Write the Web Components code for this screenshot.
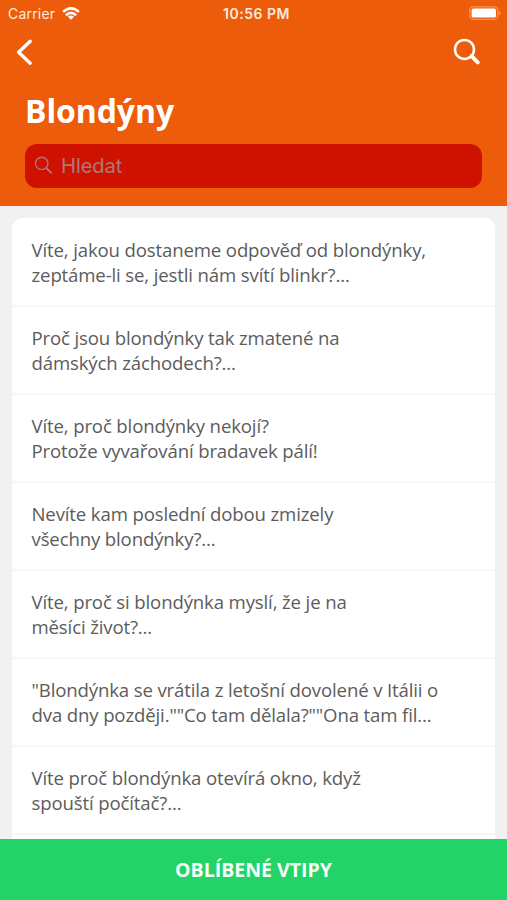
<!DOCTYPE html>
<html lang="cs">
<head>
<meta charset="utf-8">
<meta name="viewport" content="width=device-width, initial-scale=1">
<title>Blondýny</title>
<style>
  html, body {
    margin: 0;
    height: 100%;
    overflow: hidden;
  }
</style>
</head>
<body>
<joke-app>
  <status-bar slot="header" carrier="Carrier" time="10:56 PM"></status-bar>
  <nav-bar slot="header"></nav-bar>
  <page-title slot="header">Blondýny</page-title>
  <search-field slot="header">Hledat</search-field>

  <joke-list>
    <joke-item>Víte, jakou dostaneme odpověď od blondýnky,<br>zeptáme-li se, jestli nám svítí blinkr?...</joke-item>
    <joke-item>Proč jsou blondýnky tak zmatené na<br>dámských záchodech?...</joke-item>
    <joke-item>Víte, proč blondýnky nekojí?<br>Protože vyvařování bradavek pálí!</joke-item>
    <joke-item>Nevíte kam poslední dobou zmizely<br>všechny blondýnky?...</joke-item>
    <joke-item>Víte, proč si blondýnka myslí, že je na<br>měsíci život?...</joke-item>
    <joke-item>"Blondýnka se vrátila z letošní dovolené v Itálii o<br>dva dny později.""Co tam dělala?""Ona tam fil...</joke-item>
    <joke-item>Víte proč blondýnka otevírá okno, když<br>spouští počítač?...</joke-item>
  </joke-list>

  <favorites-button slot="footer">OBLÍBENÉ VTIPY</favorites-button>
</joke-app>

<script>
class JokeApp extends HTMLElement {
  constructor() {
    super();
    this.attachShadow( {mode:'open'} );
    this.shadowRoot.innerHTML = `
      <style>
        :host {
          display: flex;
          flex-direction: column;
          height: 100vh;
          overflow: hidden;
          background: #f1f1f1;
          font-family: "Open Sans", "Noto Sans", sans-serif;
        }

        header {
          flex: none;
          box-sizing: border-box;
          height: 206px;
          background: #ec5c0a;
          color: white;
        }

        main {
          flex: 1;
          min-height: 0;
          overflow: hidden;
          padding: 12px 12px 0;
        }
      </style>

      <header><slot name="header"></slot></header>
      <main><slot></slot></main>
      <slot name="footer"></slot>
    `;
  }
}

class StatusBar extends HTMLElement {
  constructor() {
    super();
    this.attachShadow( {mode:'open'} );
    this.shadowRoot.innerHTML = `
      <style>
        :host {
          display: grid;
          grid-template-columns: 1fr auto 1fr;
          align-items: center;
          box-sizing: border-box;
          height: 27px;
          padding: 0 5px 0 8px;
          font: 14px/27px Inter, "Liberation Sans", sans-serif;
          color: #ffe9dd;
        }

        .carrier {
          display: flex;
          align-items: center;
          gap: 7px;
          letter-spacing: .2px;
        }

        .time {
          padding-left: 3px;
          font-size: 14px;
          font-weight: 600;
          letter-spacing: .5px;
        }

        svg {
          display: block;
        }

        .battery {
          justify-self: end;
        }
      </style>

      <div class="carrier">
        <span id="carrier"></span>
        <svg width="18" height="13" viewBox="0 0 18 13" fill="none" stroke="#fff" stroke-width="2.5">
          <path d="M1.1 4.9Q9-2.2 16.9 4.9"/>
          <path d="M3.9 8.2Q9 3.6 14.1 8.2"/>
          <path fill="#fff" stroke="none" d="M9 12.8L5.9 9.8Q9 7.3 12.1 9.8Z"/>
        </svg>
      </div>
      <span class="time" id="time"></span>
      <svg class="battery" width="33" height="15" viewBox="0 0 33 15">
        <rect x=".8" y=".8" width="28" height="12.6" rx="3.5" fill="none" stroke="#f6935b" stroke-width="1.3"/>
        <rect x="2.6" y="2.6" width="24.4" height="9" rx="1.6" fill="#fff"/>
        <path fill="#f6935b" d="M29.9 4.9Q31.8 5.7 31.8 7.1T29.9 9.3Z"/>
      </svg>
    `;
  }

  connectedCallback() {
    this.shadowRoot.querySelector('#carrier').textContent = this.getAttribute('carrier');
    this.shadowRoot.querySelector('#time').textContent = this.getAttribute('time');
  }
}

class NavBar extends HTMLElement {
  constructor() {
    super();
    this.attachShadow( {mode:'open'} );
    this.shadowRoot.innerHTML = `
      <style>
        :host {
          display: flex;
          justify-content: space-between;
          align-items: center;
          height: 50px;
          padding: 0 26px 0 15px;
        }

        button {
          display: block;
          padding: 0;
          border: 0;
          background: none;
          color: white;
        }

        svg {
          display: block;
        }
      </style>

      <button aria-label="Zpět">
        <svg width="18" height="28" viewBox="0 0 18 28" fill="none" stroke="currentColor" stroke-width="3.4" stroke-linecap="round" stroke-linejoin="round">
          <path d="M15.2 3.2L3.6 14.3L15.2 25.2"/>
        </svg>
      </button>
      <button aria-label="Hledat">
        <svg width="28" height="28" viewBox="0 0 28 28" fill="none" stroke="currentColor">
          <circle cx="11.5" cy="11.4" r="9.5" stroke-width="2.5"/>
          <path d="M18.6 18.2L24.7 24.4" stroke-width="4" stroke-linecap="round"/>
        </svg>
      </button>
    `;
  }
}

class PageTitle extends HTMLElement {
  constructor() {
    super();
    this.attachShadow( {mode:'open'} );
    this.shadowRoot.innerHTML = `
      <style>
        :host {
          display: block;
          height: 67px;
          padding: 0 25px;
          font-size: 32px;
          font-weight: 700;
          letter-spacing: -.1px;
          line-height: 68px;
        }
      </style>

      <slot></slot>
    `;
  }
}

class SearchField extends HTMLElement {
  constructor() {
    super();
    this.attachShadow( {mode:'open'} );
    this.shadowRoot.innerHTML = `
      <style>
        :host {
          display: flex;
          align-items: center;
          gap: 8px;
          box-sizing: border-box;
          height: 44px;
          margin: 0 25px;
          padding: 0 9px 1px;
          border-radius: 12px;
          background: #cf1100;
          color: #ae7777;
          font: 20.2px Inter, "Liberation Sans", sans-serif;
          letter-spacing: -.1px;
        }

        svg {
          flex: none;
        }
      </style>

      <svg width="19" height="19" viewBox="0 0 19 19" fill="none" stroke="currentColor" stroke-linecap="round">
        <circle cx="7.7" cy="7.4" r="6.2" stroke-width="1.4"/>
        <path d="M12.3 12L17.2 16.9" stroke-width="1.9"/>
      </svg>
      <span><slot></slot></span>
    `;
  }
}

class JokeList extends HTMLElement {
  constructor() {
    super();
    this.attachShadow( {mode:'open'} );
    this.shadowRoot.innerHTML = `
      <style>
        :host {
          display: block;
          min-height: 100%;
          box-sizing: border-box;
          padding-top: 1px;
          border-radius: 10px 10px 0 0;
          background: white;
        }
      </style>

      <slot></slot>
    `;
  }
}

class JokeItem extends HTMLElement {
  constructor() {
    super();
    this.attachShadow( {mode:'open'} );
    this.shadowRoot.innerHTML = `
      <style>
        :host {
          display: block;
          box-sizing: border-box;
          height: 88px;
          padding: 18px 19.5px 0;
          border-bottom: 2px solid #f7f7f7;
          color: #5c5c5c;
          font-size: 18.6px;
          letter-spacing: -.14px;
          line-height: 25px;
          white-space: nowrap;
        }
      </style>

      <slot></slot>
    `;
  }
}

class FavoritesButton extends HTMLElement {
  constructor() {
    super();
    this.attachShadow( {mode:'open'} );
    this.shadowRoot.innerHTML = `
      <style>
        :host {
          flex: none;
          display: block;
          height: 61px;
        }

        button {
          display: block;
          width: 100%;
          height: 100%;
          padding: 0;
          border: 0;
          background: #23d367;
          color: #f4fff8;
          font: inherit;
          font-size: 19.5px;
          font-weight: 700;
        }
      </style>

      <button><slot></slot></button>
    `;
  }
}

customElements.define('joke-app', JokeApp);
customElements.define('status-bar', StatusBar);
customElements.define('nav-bar', NavBar);
customElements.define('page-title', PageTitle);
customElements.define('search-field', SearchField);
customElements.define('joke-list', JokeList);
customElements.define('joke-item', JokeItem);
customElements.define('favorites-button', FavoritesButton);
</script>
</body>
</html>
